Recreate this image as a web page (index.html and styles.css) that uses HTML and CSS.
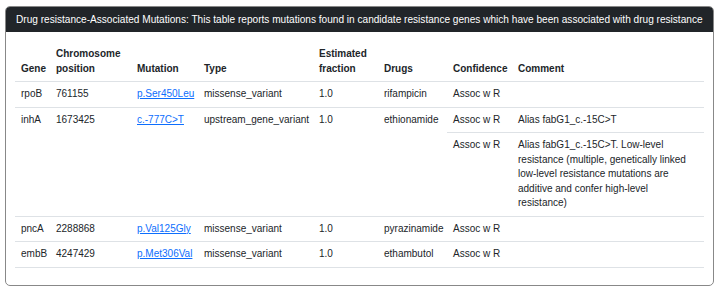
FILE: index.html
```html
<!DOCTYPE html>
<html lang="en">
<head>
  <meta charset="UTF-8" />
  <title>Drug resistance-Associated Mutations</title>
  <link rel="stylesheet" href="styles.css">
</head>
<body>
  <div class="card">
    <div class="card-header">Drug resistance-Associated Mutations: This table reports mutations found in candidate resistance genes which have been associated with drug resistance</div>
    <div class="card-body">
      <table class="mutations">
        <colgroup>
          <col class="c-gene" />
          <col class="c-pos" />
          <col class="c-mut" />
          <col class="c-type" />
          <col class="c-frac" />
          <col class="c-drug" />
          <col class="c-conf" />
          <col class="c-comment" />
        </colgroup>
        <thead>
          <tr>
            <th>Gene</th>
            <th>Chromosome position</th>
            <th>Mutation</th>
            <th>Type</th>
            <th>Estimated fraction</th>
            <th>Drugs</th>
            <th>Confidence</th>
            <th>Comment</th>
          </tr>
        </thead>
        <tbody>
          <tr>
            <td>rpoB</td>
            <td>761155</td>
            <td><a href="#">p.Ser450Leu</a></td>
            <td>missense_variant</td>
            <td>1.0</td>
            <td>rifampicin</td>
            <td>Assoc w R</td>
            <td></td>
          </tr>
          <tr>
            <td rowspan="2">inhA</td>
            <td rowspan="2">1673425</td>
            <td rowspan="2"><a href="#">c.-777C&gt;T</a></td>
            <td rowspan="2">upstream_gene_variant</td>
            <td rowspan="2">1.0</td>
            <td rowspan="2">ethionamide</td>
            <td>Assoc w R</td>
            <td>Alias fabG1_c.-15C&gt;T</td>
          </tr>
          <tr>
            <td>Assoc w R</td>
            <td>Alias fabG1_c.-15C&gt;T. Low-level resistance (multiple, genetically linked low-level resistance mutations are additive and confer high-level resistance)</td>
          </tr>
          <tr>
            <td>pncA</td>
            <td>2288868</td>
            <td><a href="#">p.Val125Gly</a></td>
            <td>missense_variant</td>
            <td>1.0</td>
            <td>pyrazinamide</td>
            <td>Assoc w R</td>
            <td></td>
          </tr>
          <tr>
            <td>embB</td>
            <td>4247429</td>
            <td><a href="#">p.Met306Val</a></td>
            <td>missense_variant</td>
            <td>1.0</td>
            <td>ethambutol</td>
            <td>Assoc w R</td>
            <td></td>
          </tr>
        </tbody>
      </table>
    </div>
  </div>
</body>
</html>
```

FILE: styles.css
```css
body {
  margin: 0;
  padding: 6px 7px 0 5px;
  font-family: 'Liberation Sans', Arial, sans-serif;
  font-size: 10px;
  color: #212529;
  background: #fff;
}

.card {
  border: 1px solid #888;
  border-radius: 5px;
  overflow: hidden;
  height: 280px;
  box-sizing: border-box;
}

.card-header {
  background-color: #212529;
  color: #fff;
  font-size: 10.1px;
  padding: 5px 10px;
  line-height: 15px;
  white-space: nowrap;
}

.card-body {
  padding: 10px 9px 0;
}

.mutations {
  width: 100%;
  border-collapse: collapse;
  table-layout: fixed;
  line-height: 14.5px;
}

.mutations th,
.mutations td {
  padding: 5px 5px 5px 6px;
  text-align: left;
  vertical-align: top;
  border-bottom: 1px solid #dee2e6;
}

.mutations th {
  font-weight: bold;
  vertical-align: bottom;
}

.mutations a {
  color: #0d6efd;
  text-decoration: underline;
}

.c-gene { width: 35px; }
.c-pos { width: 81px; }
.c-mut { width: 67px; }
.c-type { width: 115px; }
.c-frac { width: 65px; }
.c-drug { width: 69px; }
.c-conf { width: 65px; }
```
